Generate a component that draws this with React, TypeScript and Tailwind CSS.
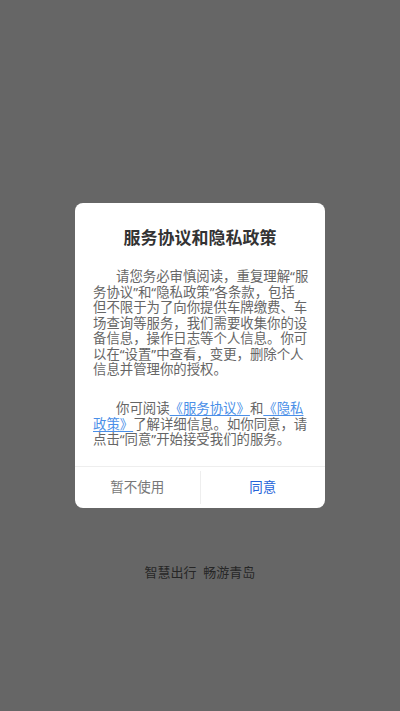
export default function App() {
  const font = { fontFamily: '"Noto Sans", "Noto Sans CJK SC", sans-serif' }
  return (
    <div style={font} className="relative flex h-[711px] w-full flex-col bg-[#666666]">
      <div className="flex-1" />
      <p className="pb-[130px] text-center text-[13px] leading-[18px] text-[#262626]">
        智慧出行&nbsp;&nbsp;畅游青岛
      </p>

      <div className="absolute inset-0 flex items-center justify-center">
        <div className="w-[250px] overflow-hidden rounded-[8px] bg-white">
          <h2 className="pt-[23px] text-center text-[17px] font-bold leading-[24px] text-[#333333]">
            服务协议和隐私政策
          </h2>

          <div className="mt-[19px] pl-[18px] pr-[16px] text-[13.4px] leading-[15.4px] whitespace-nowrap text-[#666666]">
            <p className="indent-[23px]">
              请您务必审慎阅读，重复理解“服
              <br />
              务协议”和“隐私政策”各条款，包括
              <br />
              但不限于为了向你提供车牌缴费、车
              <br />
              场查询等服务，我们需要收集你的设
              <br />
              备信息，操作日志等个人信息。你可
              <br />
              以在“设置”中查看，变更，删除个人
              <br />
              信息并管理你的授权。
            </p>
            <p className="mt-[24px] indent-[23px]">
              你可阅读
              <span className="text-[#4a8fe8] underline underline-offset-2">《服务协议》</span>
              和
              <span className="text-[#4a8fe8] underline underline-offset-2">
                《隐私
                <br />
                政策》
              </span>
              了解详细信息。如你同意，请
              <br />
              点击“同意”开始接受我们的服务。
            </p>
          </div>

          <div className="mt-[18px] flex h-[42px] border-t border-[#eeeeee]">
            <button className="flex-1 text-[13.5px] text-[#777777]">暂不使用</button>
            <div className="my-[4px] w-px bg-[#eeeeee]" />
            <button className="flex-1 text-[13.5px] text-[#2563d9]">同意</button>
          </div>
        </div>
      </div>
    </div>
  )
}
